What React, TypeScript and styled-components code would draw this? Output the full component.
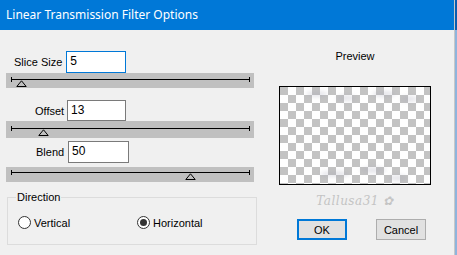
import React from "react";
import styled, { createGlobalStyle } from "styled-components";

const Global = createGlobalStyle`
  html, body { margin: 0; padding: 0; background: #f0f0f0; }
  body { font-family: "Liberation Sans", Arial, sans-serif; font-size: 11px; color: #000; }
`;

const Window = styled.div`
  width: 457px;
  height: 255px;
  display: flex;
  overflow: hidden;
`;

const Main = styled.div`
  width: 454px;
  display: flex;
  flex-direction: column;
`;

const Edge = styled.div`
  width: 3px;
  background: linear-gradient(to bottom, #0a5cb0 0, #0a5cb0 30px, #8fb4dc 30px, #8fb4dc 100%);
  border-left: 1px solid #c8c8c8;
`;

const TitleBar = styled.div`
  height: 30px;
  flex: none;
  background: #0078d7;
  color: #fff;
  font-family: "Noto Sans", "Open Sans", sans-serif;
  font-size: 12px;
  display: flex;
  align-items: center;
  padding-left: 6px;
  padding-bottom: 1px;
  box-sizing: border-box;
`;

const Body = styled.div`
  flex: 1;
  display: flex;
`;

const LeftCol = styled.div`
  width: 260px;
  display: flex;
  flex-direction: column;
  padding-left: 6px;
  box-sizing: border-box;
`;

const FieldRow = styled.div<{ $indent: number; $top: number }>`
  display: flex;
  align-items: center;
  gap: 4px;
  padding-left: ${(p) => p.$indent}px;
  margin-top: ${(p) => p.$top}px;
`;

const Label = styled.span<{ $w?: number }>`
  font-size: 11px;
  white-space: nowrap;
  width: ${(p) => (p.$w ? `${p.$w}px` : "auto")};
  text-align: right;
`;

const Input = styled.div<{ $w: number; $h: number; $focus?: boolean }>`
  width: ${(p) => p.$w}px;
  height: ${(p) => p.$h}px;
  box-sizing: border-box;
  background: #fff;
  border: 1px solid ${(p) => (p.$focus ? "#0078d7" : "#7a7a7a")};
  font-size: 12px;
  padding: 2px 0 0 3px;
  line-height: 14px;
`;

const Track = styled.div<{ $h: number; $lineTop: number }>`
  width: 248px;
  height: ${(p) => p.$h}px;
  background: #c0c0c0;
  padding: ${(p) => p.$lineTop - 2}px 4px 0 5px;
  box-sizing: border-box;
`;

const Rail = styled.div`
  position: relative;
  height: 5px;
  border-left: 1px solid #000;
  border-right: 1px solid #000;
  &::before {
    content: "";
    position: absolute;
    left: 0;
    right: 0;
    top: 2px;
    height: 1px;
    background: #000;
  }
`;

const Thumb = styled.svg`
  position: absolute;
  top: 3px;
  width: 11px;
  height: 7px;
  margin-left: -5px;
`;

const Slider = ({ pos, h, lineTop }: { pos: number; h: number; lineTop: number }) => (
  <Track $h={h} $lineTop={lineTop}>
    <Rail>
      <Thumb style={{ left: `${pos * 100}%` }} viewBox="0 0 11 7">
        <path d="M5.5 0.8 L0.8 6.5 L10.2 6.5 Z" fill="none" stroke="#000" strokeWidth="1" />
      </Thumb>
    </Rail>
  </Track>
);

const Group = styled.fieldset`
  margin: 9px 0 0 1px;
  width: 250px;
  height: 54px;
  box-sizing: border-box;
  border: 1px solid #dcdcdc;
  padding: 13px 0 0 10px;
  display: flex;
  align-items: flex-start;
`;

const Legend = styled.legend`
  font-size: 11px;
  padding: 0 1px;
  margin-left: -2px;
`;

const RadioOpt = styled.label<{ $w: number }>`
  display: flex;
  align-items: center;
  gap: 3px;
  width: ${(p) => p.$w}px;
  font-size: 11px;
`;

const RadioDot = styled.span<{ $on?: boolean }>`
  width: 13px;
  height: 13px;
  box-sizing: border-box;
  border-radius: 50%;
  border: 1px solid #333;
  background: #fff;
  display: flex;
  align-items: center;
  justify-content: center;
  &::after {
    content: "";
    width: 7px;
    height: 7px;
    border-radius: 50%;
    background: ${(p) => (p.$on ? "#333" : "transparent")};
  }
`;

const RightCol = styled.div`
  width: 194px;
  display: flex;
  flex-direction: column;
  padding-left: 19px;
  box-sizing: border-box;
`;

const PreviewTitle = styled.div`
  width: 152px;
  text-align: center;
  font-size: 11px;
  margin-top: 20px;
`;

const PreviewBox = styled.div`
  position: relative;
  margin-top: 24px;
  width: 152px;
  height: 99px;
  box-sizing: border-box;
  border: 1px solid #000;
  overflow: hidden;
  background-color: #fff;
  background-image:
    linear-gradient(45deg, #c3c3c3 25%, transparent 25%, transparent 75%, #c3c3c3 75%),
    linear-gradient(45deg, #c3c3c3 25%, transparent 25%, transparent 75%, #c3c3c3 75%);
  background-size: 16px 16px;
  background-position: 8px 0, 0 8px;
`;

const Smudge = styled.div`
  position: absolute;
  height: 6px;
  border-radius: 50%;
  background: rgba(160, 160, 180, 0.28);
  filter: blur(2px);
`;

const Watermark = styled.div`
  width: 152px;
  text-align: center;
  margin-top: 9px;
  font-family: "DejaVu Serif", serif;
  font-style: italic;
  font-size: 12px;
  color: #c4c4c4;
  letter-spacing: 0.5px;
  height: 16px;
`;

const ButtonRow = styled.div`
  display: flex;
  gap: 29px;
  margin-top: 9px;
  padding-left: 18px;
`;

const Button = styled.div<{ $default?: boolean }>`
  width: 50px;
  height: 21px;
  box-sizing: border-box;
  border: ${(p) => (p.$default ? "2px solid #0078d7" : "1px solid #adadad")};
  background: #e1e1e1;
  display: flex;
  align-items: center;
  justify-content: center;
  font-size: 11px;
`;

const smudges = [
  { left: 26, top: 4, width: 22 },
  { left: 56, top: 8, width: 20 },
  { left: 92, top: 4, width: 24 },
  { left: 120, top: 9, width: 18 },
  { left: 40, top: 84, width: 30 },
  { left: 80, top: 80, width: 26 },
  { left: 108, top: 88, width: 20 },
];

export default function App() {
  return (
    <>
      <Global />
      <Window>
        <Main>
          <TitleBar>Linear Transmission Filter Options</TitleBar>
          <Body>
            <LeftCol>
              <FieldRow $indent={8} $top={21}>
                <Label>Slice Size</Label>
                <Input $w={60} $h={22} $focus>5</Input>
              </FieldRow>
              <Slider pos={0.038} h={15} lineTop={6} />
              <FieldRow $indent={29} $top={12}>
                <Label $w={28}>Offset</Label>
                <Input $w={59} $h={21}>13</Input>
              </FieldRow>
              <Slider pos={0.13} h={17} lineTop={7} />
              <FieldRow $indent={30} $top={3}>
                <Label $w={28}>Blend</Label>
                <Input $w={61} $h={22}>50</Input>
              </FieldRow>
              <FieldRow $indent={0} $top={4}>
                <Slider pos={0.753} h={15} lineTop={5} />
              </FieldRow>
              <Group>
                <Legend>Direction</Legend>
                <RadioOpt $w={119}>
                  <RadioDot />
                  Vertical
                </RadioOpt>
                <RadioOpt $w={100}>
                  <RadioDot $on />
                  Horizontal
                </RadioOpt>
              </Group>
            </LeftCol>
            <RightCol>
              <PreviewTitle>Preview</PreviewTitle>
              <PreviewBox>
                {smudges.map((s, i) => (
                  <Smudge key={i} style={{ left: s.left, top: s.top, width: s.width }} />
                ))}
              </PreviewBox>
              <Watermark>Tallusa31 ✿</Watermark>
              <ButtonRow>
                <Button $default>OK</Button>
                <Button>Cancel</Button>
              </ButtonRow>
            </RightCol>
          </Body>
        </Main>
        <Edge />
      </Window>
    </>
  );
}
